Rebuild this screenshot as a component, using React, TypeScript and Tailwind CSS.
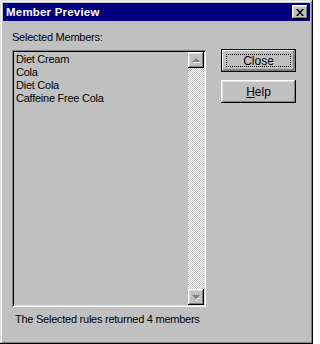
import React from 'react';

const MEMBERS = ['Diet Cream', 'Cola', 'Diet Cola', 'Caffeine Free Cola'];

const raised =
  'shadow-[inset_-1px_-1px_#000,inset_1px_1px_#fff,inset_-2px_-2px_#808080,inset_2px_2px_#dfdfdf]';

const ScrollArrow: React.FC<{ up?: boolean }> = ({ up }) => (
  <div className={`w-[16px] h-[16px] bg-[#c0c0c0] flex items-center justify-center ${raised}`}>
    <svg width="8" height="5" viewBox="0 0 8 5">
      {up ? (
        <>
          <polygon points="0,4 4,0 8,4" fill="#808080" />
          <rect x="1" y="4" width="7" height="1" fill="#fff" />
        </>
      ) : (
        <>
          <polygon points="0,0 8,0 4,4" fill="#808080" />
          <rect x="4" y="4" width="1" height="1" fill="#fff" />
          <rect x="5" y="3" width="3" height="1" fill="#fff" />
        </>
      )}
    </svg>
  </div>
);

const Button: React.FC<{ isDefault?: boolean; children: React.ReactNode }> = ({ isDefault, children }) => (
  <button
    className={`relative w-[75px] h-[23px] bg-[#c0c0c0] text-black text-[12px] leading-[14px] ${
      isDefault
        ? 'border border-black shadow-[inset_-1px_-1px_#808080,inset_1px_1px_#fff,inset_-2px_-2px_#808080]'
        : raised
    }`}
  >
    {isDefault && <span className="absolute inset-[4px] border border-dotted border-black" />}
    <span className="relative">{children}</span>
  </button>
);

const App: React.FC = () => {
  return (
    <div
      className={`w-[313px] h-[344px] bg-[#c0c0c0] p-[3px] flex flex-col text-black shadow-[inset_-1px_-1px_#000,inset_1px_1px_#dfdfdf,inset_-2px_-2px_#808080,inset_2px_2px_#fff]`}
      style={{ fontFamily: '"Liberation Sans", Arial, sans-serif' }}
    >
      {/* title bar */}
      <div className="h-[18px] bg-[#000080] flex items-center justify-between pl-[3px] pr-[2px]">
        <span className="text-white font-bold text-[11.5px] leading-[13px] tracking-[0.2px]">Member Preview</span>
        <div className={`w-[16px] h-[14px] bg-[#c0c0c0] flex items-center justify-center ${raised}`}>
          <svg width="8" height="7" viewBox="0 0 8 7">
            <path d="M0 0h2l2 2.5 2-2.5h2L5 3.5 8 7H6L4 4.5 2 7H0l3-3.5z" fill="#000" />
          </svg>
        </div>
      </div>

      <div className="flex pl-[9px] pt-[10px] text-[11px] leading-[13px] tracking-[-0.25px]">
        <div className="flex flex-col">
          <div>Selected Members:</div>
          <div className="mt-[6px] w-[194px] h-[257px] flex shadow-[inset_1px_1px_#808080,inset_-1px_-1px_#fff,inset_2px_2px_#000,inset_-2px_-2px_#dfdfdf] p-[2px]">
            <ul className="flex-1 pl-[2px] pt-[1px]">
              {MEMBERS.map((m) => (
                <li key={m}>{m}</li>
              ))}
            </ul>
            <div className="w-[16px] flex flex-col">
              <ScrollArrow up />
              <div className="flex-1 bg-[repeating-conic-gradient(#fff_0%_25%,#c0c0c0_0%_50%)] bg-[length:2px_2px]" />
              <ScrollArrow />
            </div>
          </div>
          <div className="mt-[6px] pl-[3px]">The Selected rules returned 4 members</div>
        </div>

        <div className="ml-[15px] mt-[18px] flex flex-col gap-[8px] tracking-normal">
          <Button isDefault>Close</Button>
          <Button>
            <u>H</u>elp
          </Button>
        </div>
      </div>
    </div>
  );
};

export default App;
